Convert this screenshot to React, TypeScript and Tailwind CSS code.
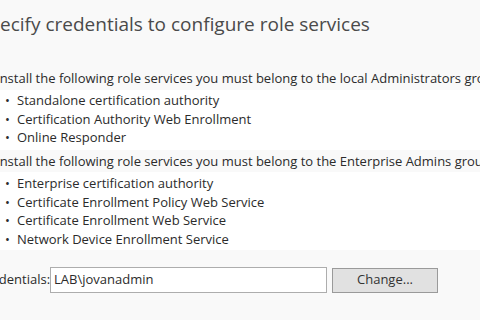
export default function App() {
  const localItems = [
    'Standalone certification authority',
    'Certification Authority Web Enrollment',
    'Online Responder',
  ]
  const enterpriseItems = [
    'Enterprise certification authority',
    'Certificate Enrollment Policy Web Service',
    'Certificate Enrollment Web Service',
    'Network Device Enrollment Service',
  ]

  return (
    <div className="w-[480px] h-[320px] overflow-hidden bg-[#f9f9f9] text-[#2b2b2b] font-['Open_Sans',sans-serif]">
      <div className="ml-[-22px] w-max whitespace-nowrap">
        {/* Title */}
        <h1 className="pt-[8px] h-[40px] text-[19px] leading-[32px] text-[#4a4a4a]">
          Specify credentials to configure role services
        </h1>

        {/* Local admins */}
        <p className="mt-[28px] h-[22px] text-[13px] leading-[20px]">
          To install the following role services you must belong to the local Administrators group:
        </p>
        <ul className="bg-white pl-[27px] pt-[1px] pb-[3px] text-[13px] leading-[18.7px]">
          {localItems.map((item) => (
            <li key={item} className="flex">
              <span className="w-[12px]">•</span>
              <span>{item}</span>
            </li>
          ))}
        </ul>

        {/* Enterprise admins */}
        <p className="h-[22px] pt-[1px] text-[13px] leading-[20px]">
          To install the following role services you must belong to the Enterprise Admins group:
        </p>
        <ul className="bg-white pl-[27px] pt-[2px] pb-[2px] text-[13px] leading-[18.5px]">
          {enterpriseItems.map((item) => (
            <li key={item} className="flex">
              <span className="w-[12px]">•</span>
              <span>{item}</span>
            </li>
          ))}
        </ul>

        {/* Credentials row */}
        <div className="mt-[17px] flex items-center text-[13px]">
          <span className="w-[72px]">Credentials:</span>
          <div className="w-[277px] h-[26px] border border-[#adadad] bg-white flex items-center px-[3px]">
            LAB\jovanadmin
          </div>
          <button className="ml-[5px] w-[106px] h-[25px] border border-[#9a9a9a] bg-[#e1e1e1] text-[#333]">
            Change...
          </button>
        </div>
      </div>
    </div>
  )
}
